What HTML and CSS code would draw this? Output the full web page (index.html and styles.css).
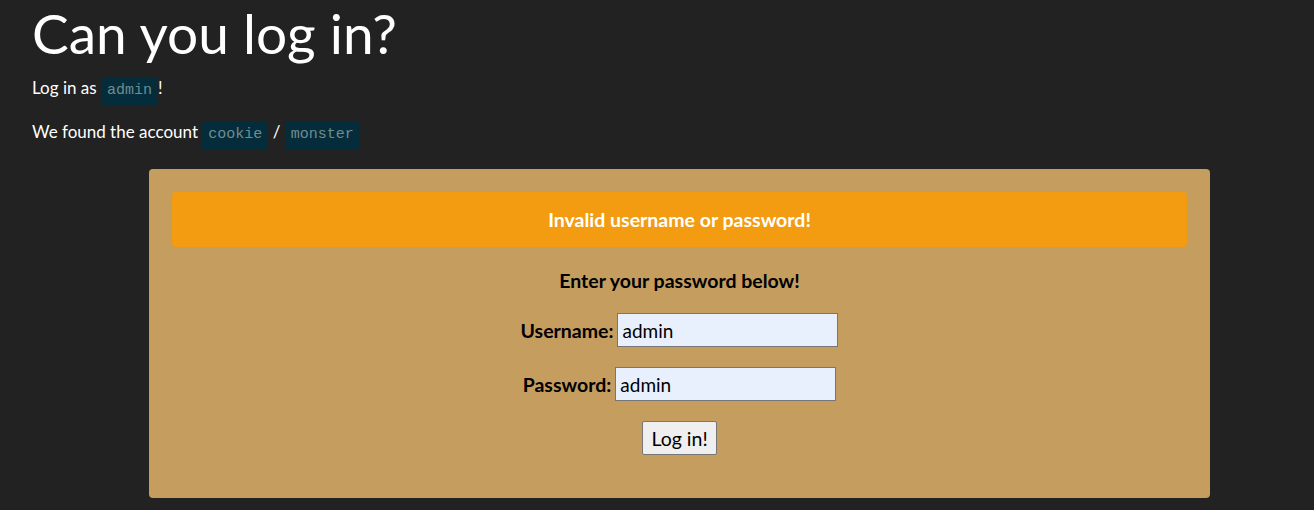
FILE: index.html
```html
<!DOCTYPE html>
<html>
<head>
<meta charset="utf-8">
<link rel="stylesheet" href="styles.css">
</head>
<body>
<h1 class="title">Can you log in?</h1>
<p class="line">Log in as <code class="code">admin</code>!</p>
<p class="line">We found the account <code class="code">cookie</code> / <code class="code">monster</code></p>
<div class="panel">
  <div class="alert">Invalid username or password!</div>
  <form class="form">
    <p class="prompt">Enter your password below!</p>
    <div class="row"><label class="label">Username:</label><input class="field" type="text" value="admin"></div>
    <div class="row"><label class="label">Password:</label><input class="field" type="text" value="admin"></div>
    <div class="row"><button class="btn" type="button">Log in!</button></div>
  </form>
</div>
</body>
</html>
```
FILE: styles.css
```css
html, body {
  margin: 0;
  background: #222222;
}
body {
  padding: 0 32px;
  font-family: Lato, "Liberation Sans", sans-serif;
  color: #ffffff;
  font-size: 17px;
}
.title {
  font-size: 55px;
  font-weight: 400;
  line-height: 66px;
  margin: 0 0 8px 0;
}
.line {
  margin: 0 0 16px 0;
  line-height: 28px;
  height: 28px;
}
.code {
  font-family: "Liberation Mono", "DejaVu Sans Mono", monospace;
  font-size: 15px;
  line-height: 1;
  background: #052c3a;
  color: #6e8d93;
  padding: 5px 6px 6px;
}
.panel {
  margin: 23px 0 0 117px;
  width: 1061px;
  box-sizing: border-box;
  background: #c49d5f;
  border-radius: 4px;
  padding: 23px 23px 43px;
  color: #000;
}
.alert {
  background: #f39c12;
  border-radius: 4px;
  color: #fff;
  font-weight: 700;
  font-size: 19.5px;
  height: 55px;
  display: flex;
  align-items: center;
  justify-content: center;
}
.form {
  display: flex;
  flex-direction: column;
  align-items: center;
  gap: 20px;
  margin-top: 22px;
}
.prompt {
  margin: 0 0 1px;
  font-weight: 700;
  font-size: 19.5px;
  line-height: 23px;
}
.row {
  display: flex;
  align-items: center;
  gap: 4px;
}
.label {
  font-weight: 700;
  font-size: 19.5px;
}
.field {
  width: 221px;
  height: 34px;
  box-sizing: border-box;
  border: 1px solid #767676;
  background: #e8f0fe;
  font-family: Lato, "Liberation Sans", sans-serif;
  font-size: 19px;
  padding: 0 4px;
  margin: 0;
  color: #000;
}
.btn {
  height: 34px;
  box-sizing: border-box;
  border: 1px solid #767676;
  background: #efefef;
  border-radius: 2px;
  font-family: Lato, "Liberation Sans", sans-serif;
  font-size: 19.5px;
  padding: 0 8px;
  margin: 0;
  color: #000;
}
```
